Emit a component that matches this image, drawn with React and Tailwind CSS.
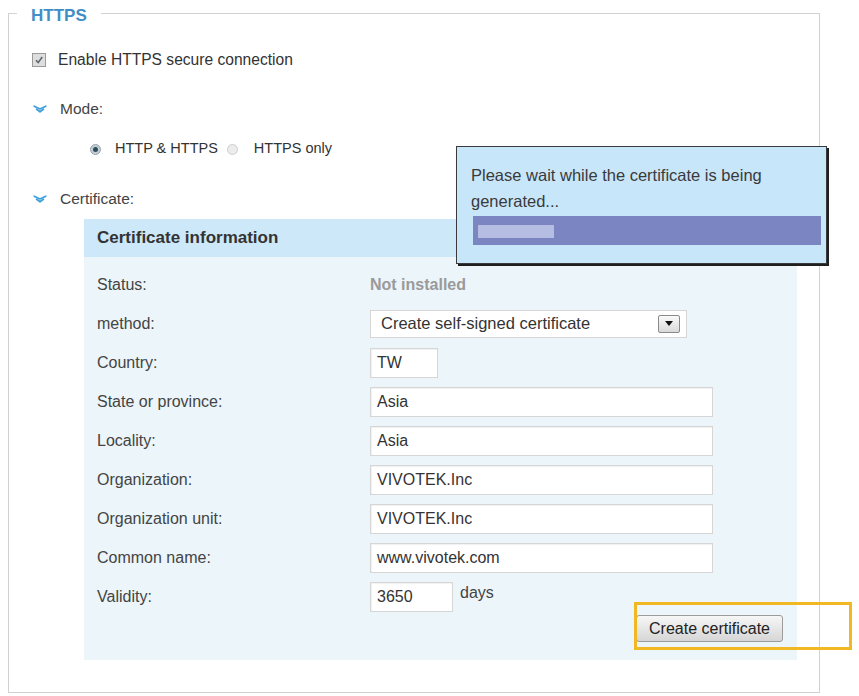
import React from "react";

const rows = [
  { label: "Country:", kind: "input", value: "TW", width: "w-[68px]" },
  { label: "State or province:", kind: "input", value: "Asia", width: "w-[343px]" },
  { label: "Locality:", kind: "input", value: "Asia", width: "w-[343px]" },
  { label: "Organization:", kind: "input", value: "VIVOTEK.Inc", width: "w-[343px]" },
  { label: "Organization unit:", kind: "input", value: "VIVOTEK.Inc", width: "w-[343px]" },
  { label: "Common name:", kind: "input", value: "www.vivotek.com", width: "w-[343px]" },
];

// blue double chevron used in front of the section titles
function Chevrons() {
  return (
    <svg width="14" height="8" viewBox="0 0 14 8" fill="none" stroke="#3f9fd9" strokeWidth="1.7" strokeLinecap="round" strokeLinejoin="round">
      <path d="M1.2 1.2 L7 4 L12.8 1.2" />
      <path d="M3.6 4.2 L7 6.8 L10.4 4.2" />
    </svg>
  );
}

function Radio({ checked }) {
  return (
    <span className={`flex h-[11px] w-[11px] items-center justify-center rounded-full border ${checked ? "border-[#9aa4ab] bg-[#c5ced4]" : "border-[#cfcfcf] bg-[#ececec]"}`}>
      {checked && <span className="h-[5px] w-[5px] rounded-full bg-[#2a4f5e]" />}
    </span>
  );
}

function TextBox({ value, width }) {
  return (
    <div className={`${width} flex h-[30px] items-center border border-[#d6d6d6] bg-white pl-[6px] text-[16px] text-[#333] shadow-[inset_1px_1px_1px_rgba(0,0,0,0.06)]`}>
      {value}
    </div>
  );
}

function Row({ label, children }) {
  return (
    <div className="grid h-[39px] grid-cols-[273px_1fr] items-center">
      <span className="text-[16px] text-[#444]">{label}</span>
      <div className="flex items-center">{children}</div>
    </div>
  );
}

export default function App() {
  return (
    <div className="min-h-screen bg-white font-['Liberation_Sans',Arial,sans-serif] text-[#333]">
      <div className="relative h-[696px] w-[859px]">
        <fieldset className="ml-2 mt-[1px] h-[692px] w-[812px] border border-[#d2d2d2] p-0">
          <legend className="ml-[8px] px-[14px] pt-[5px] text-[17px] font-bold leading-5 text-[#3f8fc6]">HTTPS</legend>

          <div className="pl-[23px] pt-[24px]">
            <div className="flex h-5 items-center gap-3">
              <span className="flex h-[14px] w-[14px] items-center justify-center border border-[#9a9a9a] bg-[#dedede]">
                <svg width="10" height="10" viewBox="0 0 10 10" fill="none" stroke="#5a6670" strokeWidth="1.6">
                  <path d="M2 5.2 L4.2 7.6 L8.2 2" />
                </svg>
              </span>
              <span className="text-[15.6px] text-[#333]">Enable HTTPS secure connection</span>
            </div>

            <div className="mt-[29px] flex h-5 items-center gap-[13px] pl-[1px]">
              <Chevrons />
              <span className="text-[15.5px] text-[#444]">Mode:</span>
            </div>

            <div className="mt-5 flex h-5 items-center pl-[58px] text-[14.5px] text-[#333]">
              <Radio checked />
              <span className="ml-[14px]">HTTP &amp; HTTPS</span>
              <span className="ml-[9px]">
                <Radio />
              </span>
              <span className="ml-[16px]">HTTPS only</span>
            </div>

            <div className="mt-[30px] flex h-5 items-center gap-[13px] pl-[1px]">
              <Chevrons />
              <span className="text-[15.5px] text-[#444]">Certificate:</span>
            </div>

            <div className="ml-[52px] mt-[10px] w-[713px]">
              <div className="flex h-[38px] items-center bg-[#cde8f8] pl-[13px] text-[17px] font-bold text-[#333]">
                Certificate information
              </div>
              <div className="bg-[#ecf5fa] pb-[18px] pl-[13px] pr-[14px] pt-2">
                <Row label="Status:">
                  <span className="text-[16px] font-bold text-[#9a9a9a]">Not installed</span>
                </Row>
                <Row label="method:">
                  <div className="flex h-[28px] w-[317px] items-center justify-between border border-[#d6d6d6] bg-white pl-[10px] pr-[6px] text-[16.5px] text-[#333]">
                    <span>Create self-signed certificate</span>
                    <span className="flex h-[18px] w-[22px] items-center justify-center rounded-[2px] border border-[#8a8a8a] bg-gradient-to-b from-[#fafafa] to-[#d9d9d9]">
                      <svg width="8" height="5" viewBox="0 0 8 5">
                        <path d="M0 0 H8 L4 5 Z" fill="#111" />
                      </svg>
                    </span>
                  </div>
                </Row>
                {rows.map((r) => (
                  <Row key={r.label} label={r.label}>
                    <TextBox value={r.value} width={r.width} />
                  </Row>
                ))}
                <Row label="Validity:">
                  <TextBox value="3650" width="w-[83px]" />
                  <span className="ml-[7px] -mt-[8px] text-[16px] text-[#444]">days</span>
                </Row>

                <div className="flex justify-end">
                  <div className="relative">
                    <button className="-mt-[1px] h-[27px] w-[147px] rounded-[3px] border border-[#9c9c9c] bg-gradient-to-b from-[#f7f7f7] to-[#d6d6d6] text-[16px] text-[#222]">
                      Create certificate
                    </button>
                    <div className="absolute -left-[2px] -top-[14px] h-[48px] w-[218px] border-[3px] border-[#f2b824]" />
                  </div>
                </div>
              </div>
            </div>
          </div>
        </fieldset>

        {/* progress popup shown while the certificate is generated */}
        <div className="absolute left-[456px] top-[145px] h-[118px] w-[371px] border border-[#3a3a3a] bg-[#c8e6fa] pl-[14px] pr-[6px] pt-[15px] shadow-[2px_2px_0_#1f1f1f]">
          <p className="text-[16.5px] leading-[26px] text-[#3a3a3a]">
            Please wait while the certificate is being
            <br />
            generated...
          </p>
          <div className="relative ml-[2px] mt-[2px] h-[29px] w-[348px] bg-[#7a85c2]">
            <div className="absolute left-[5px] top-[9px] h-[13px] w-[76px] bg-[#b6bde2]" />
          </div>
        </div>
      </div>
    </div>
  );
}
